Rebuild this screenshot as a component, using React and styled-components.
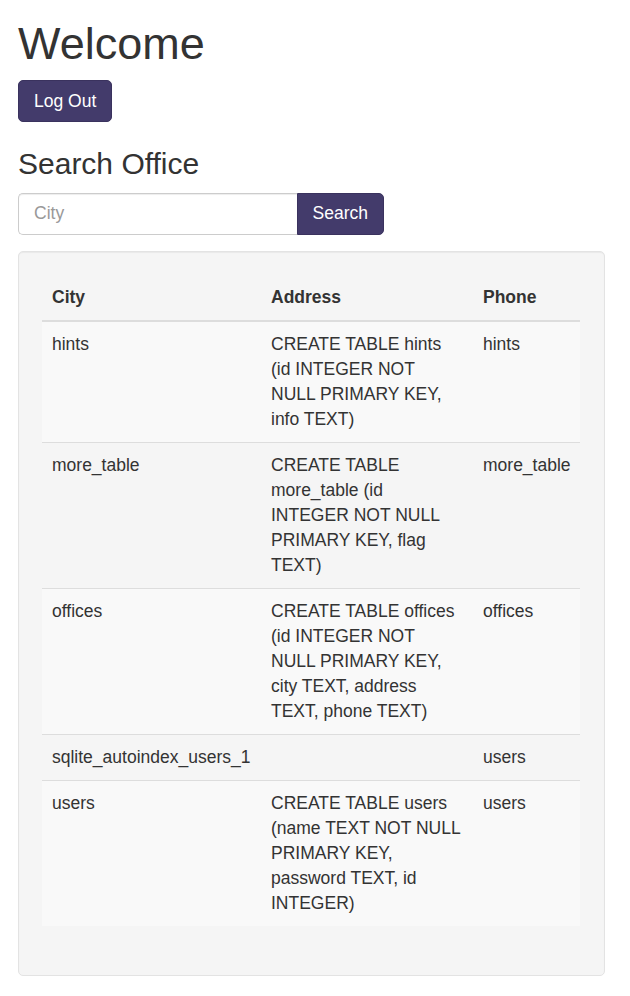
import { createGlobalStyle, styled } from 'styled-components';

const GlobalStyle = createGlobalStyle`
  * { box-sizing: border-box; }
  body {
    margin: 0;
    background: #fff;
    color: #333;
    font-family: "Liberation Sans", Arial, Helvetica, sans-serif;
    font-size: 17.5px;
    line-height: 25px;
  }
`;

const rows = [
  { city: 'hints', address: 'CREATE TABLE hints (id INTEGER NOT NULL PRIMARY KEY, info TEXT)', phone: 'hints' },
  { city: 'more_table', address: 'CREATE TABLE more_table (id INTEGER NOT NULL PRIMARY KEY, flag TEXT)', phone: 'more_table' },
  { city: 'offices', address: 'CREATE TABLE offices (id INTEGER NOT NULL PRIMARY KEY, city TEXT, address TEXT, phone TEXT)', phone: 'offices' },
  { city: 'sqlite_autoindex_users_1', address: '', phone: 'users' },
  { city: 'users', address: 'CREATE TABLE users (name TEXT NOT NULL PRIMARY KEY, password TEXT, id INTEGER)', phone: 'users' },
];

function App() {
  return (
    <Container>
      <GlobalStyle />
      <Title>Welcome</Title>
      <Button type="button">Log Out</Button>
      <Subtitle>Search Office</Subtitle>
      <InputGroup>
        <CityInput type="text" placeholder="City" />
        <Button type="button" $attached>
          Search
        </Button>
      </InputGroup>
      <Well>
        <Table>
          <colgroup>
            <col style={{ width: 219 }} />
            <col style={{ width: 212 }} />
            <col />
          </colgroup>
          <thead>
            <tr>
              <th>City</th>
              <th>Address</th>
              <th>Phone</th>
            </tr>
          </thead>
          <tbody>
            {rows.map((row) => (
              <tr key={row.city}>
                <td>{row.city}</td>
                <td>{row.address}</td>
                <td>{row.phone}</td>
              </tr>
            ))}
          </tbody>
        </Table>
      </Well>
    </Container>
  );
}

const Container = styled.div`
  padding: 0 25px 20px 18px;
`;

const Title = styled.h1`
  margin: 0 0 11.5px;
  padding-top: 19px;
  font-size: 45px;
  line-height: 49.5px;
  font-weight: 500;
`;

const Subtitle = styled.h3`
  margin: 25px 0 12.5px;
  font-size: 30px;
  line-height: 33px;
  font-weight: 500;
`;

const Button = styled.button`
  display: inline-block;
  height: 42px;
  padding: 0 15px;
  font-family: inherit;
  font-size: 17.5px;
  line-height: 25px;
  color: #fff;
  background: #433b6b;
  border: 1px solid #3a325e;
  border-radius: ${({ $attached }) => ($attached ? '0 5px 5px 0' : '5px')};
  cursor: pointer;
`;

const InputGroup = styled.div`
  display: flex;
  width: 366px;
  margin-bottom: 16px;
`;

const CityInput = styled.input`
  flex: 1;
  min-width: 0;
  height: 42px;
  padding: 7px 15px;
  font-family: inherit;
  font-size: 17.5px;
  color: #555;
  border: 1px solid #ccc;
  border-right: none;
  border-radius: 5px 0 0 5px;
  box-shadow: inset 0 1px 1px rgba(0, 0, 0, 0.075);
  outline: none;

  &::placeholder {
    color: #999;
  }
`;

const Well = styled.div`
  background: #f5f5f5;
  border: 1px solid #e3e3e3;
  border-radius: 5px;
  box-shadow: inset 0 1px 1px rgba(0, 0, 0, 0.05);
  padding: 23px 24px 24px 23px;
`;

const Table = styled.table`
  width: 100%;
  border-collapse: collapse;
  border-spacing: 0;
  margin-bottom: 25px;
  table-layout: fixed;

  th,
  td {
    padding: 10px;
    text-align: left;
    vertical-align: top;
  }

  th {
    font-weight: 700;
    border-bottom: 2px solid #ddd;
  }

  td {
    border-top: 1px solid #ddd;
  }

  tbody tr:first-child td {
    border-top: none;
  }

  tbody tr:nth-child(odd) {
    background: #f9f9f9;
  }
`;

export default App;
